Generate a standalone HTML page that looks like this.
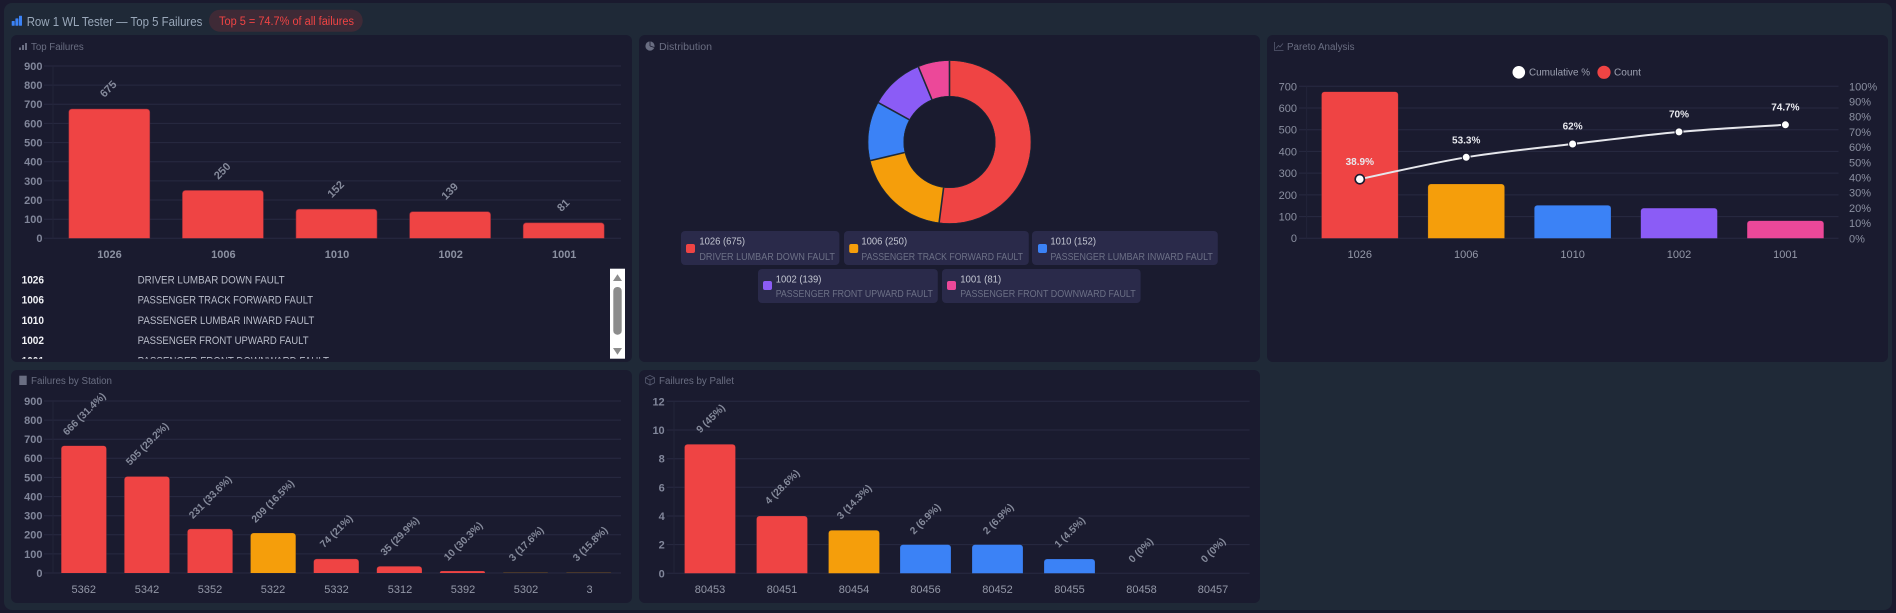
<!DOCTYPE html>
<html>
<head>
<meta charset="utf-8">
<title>Row 1 WL Tester</title>
<style>
html,body{margin:0;padding:0;background:#1a1a2e;width:1896px;height:613px;overflow:hidden}
svg{display:block;filter:blur(.35px)}
text{font-family:"Liberation Sans",sans-serif}
.tk{font-size:11px;fill:#8b90a1;text-anchor:end}
.tb{font-size:11px;fill:#81869a;text-anchor:end;font-weight:700}
.xb{font-size:11px;fill:#8b90a1;text-anchor:middle;font-weight:700}
.xn{font-size:11px;fill:#9498a8;text-anchor:middle}
.r{font-size:10.2px;font-weight:700;fill:#858a9b;text-anchor:middle}
.r1{font-size:11px;font-weight:700;fill:#858a9b;text-anchor:middle}
.pt{font-size:10px;fill:#6a6e82}
.c{font-size:11px;font-weight:700;fill:#f1f2f6}
.d{font-size:11px;fill:#b9bdca}
.l1{font-size:10.5px;fill:#c4c7d2}
.l2{font-size:10px;fill:#6c7086}
.p{font-size:10px;font-weight:700;fill:#e8e9ee;text-anchor:middle}
.g{stroke:#282a42;stroke-width:1;fill:none}
.v{stroke:#222439;stroke-width:1;fill:none}
</style>
</head>
<body>
<svg width="1896" height="613" viewBox="0 0 1896 613" xmlns="http://www.w3.org/2000/svg">
<defs>
<clipPath id="c1"><rect x="40" y="50" width="590" height="188.3"/></clipPath>
<clipPath id="c2"><rect x="40" y="380" width="590" height="193"/></clipPath>
<clipPath id="c3"><rect x="660" y="380" width="600" height="193.3"/></clipPath>
<clipPath id="c4"><rect x="1300" y="80" width="560" height="158.3"/></clipPath>
<clipPath id="lst"><rect x="11" y="268" width="598" height="90.7"/></clipPath>
</defs>

<rect x="4" y="3" width="1888" height="607" rx="8" fill="#1f2937"/>

<!-- header -->
<g fill="#3b82f6">
<rect x="11.7" y="21" width="3" height="4.7" rx=".6"/>
<rect x="15.4" y="18.4" width="3" height="7.3" rx=".6"/>
<rect x="19" y="15.7" width="3" height="10" rx=".6"/>
</g>
<text x="26.7" y="26" font-size="12.5" fill="#9aa8ba" textLength="175.6" lengthAdjust="spacingAndGlyphs">Row 1 WL Tester — Top 5 Failures</text>
<rect x="209" y="9.7" width="153.7" height="22" rx="11" fill="#3e2a36"/>
<text x="219" y="25" font-size="11.5" fill="#ef4444" textLength="135" lengthAdjust="spacingAndGlyphs">Top 5 = 74.7% of all failures</text>

<!-- panels -->
<g fill="#1a1b2f">
<rect x="11" y="35" width="621" height="327" rx="6"/>
<rect x="639" y="35" width="621" height="327" rx="6"/>
<rect x="1267" y="35" width="621" height="327" rx="6"/>
<rect x="11" y="370" width="621" height="233" rx="6"/>
<rect x="639" y="370" width="621" height="233" rx="6"/>
</g>

<!-- Panel 1 -->
<g fill="#6a6e82">
<rect x="19" y="47.5" width="2" height="2.5"/>
<rect x="22" y="45" width="2" height="5"/>
<rect x="25" y="43" width="2" height="7"/>
</g>
<text class="pt" x="31" y="50" textLength="52.7" lengthAdjust="spacingAndGlyphs">Top Failures</text>
<path class="g" d="M44 66H621M44 85.1H621M44 104.3H621M44 123.4H621M44 142.6H621M44 161.7H621M44 180.9H621M44 200H621M44 219.2H621M44 238.3H621"/>
<path class="v" d="M53 66V238.3"/>
<text class="tb" x="42.5" y="70">900</text>
<text class="tb" x="42.5" y="89">800</text>
<text class="tb" x="42.5" y="108">700</text>
<text class="tb" x="42.5" y="127.3">600</text>
<text class="tb" x="42.5" y="146.5">500</text>
<text class="tb" x="42.5" y="165.6">400</text>
<text class="tb" x="42.5" y="184.8">300</text>
<text class="tb" x="42.5" y="204">200</text>
<text class="tb" x="42.5" y="223.1">100</text>
<text class="tb" x="42.5" y="242.2">0</text>
<g clip-path="url(#c1)" fill="#ef4444" stroke="#8a2b3a" stroke-width=".6">
<rect x="68.8" y="109" width="81" height="140" rx="3"/>
<rect x="182.4" y="190.4" width="81" height="60" rx="3"/>
<rect x="296" y="209.2" width="81" height="40" rx="3"/>
<rect x="409.6" y="211.7" width="81" height="40" rx="3"/>
<rect x="523.2" y="222.8" width="81" height="30" rx="3"/>
</g>
<text class="r1" transform="rotate(-45 108 88.7)" x="108" y="92.7">675</text>
<text class="r1" transform="rotate(-45 222 170.7)" x="222" y="174.7">250</text>
<text class="r1" transform="rotate(-45 335.5 189)" x="335.5" y="193">152</text>
<text class="r1" transform="rotate(-45 449.5 191)" x="449.5" y="195">139</text>
<text class="r1" transform="rotate(-45 563 205)" x="563" y="209">81</text>
<text class="xb" x="109.5" y="258">1026</text>
<text class="xb" x="223.4" y="258">1006</text>
<text class="xb" x="337" y="258">1010</text>
<text class="xb" x="450.6" y="258">1002</text>
<text class="xb" x="564.2" y="258">1001</text>
<g clip-path="url(#lst)">
<text class="c" x="21.6" y="283.3" textLength="22.4" lengthAdjust="spacingAndGlyphs">1026</text>
<text class="d" x="137.6" y="283.3" textLength="147" lengthAdjust="spacingAndGlyphs">DRIVER LUMBAR DOWN FAULT</text>
<text class="c" x="21.6" y="303.5" textLength="22.4" lengthAdjust="spacingAndGlyphs">1006</text>
<text class="d" x="137.6" y="303.5" textLength="175.5" lengthAdjust="spacingAndGlyphs">PASSENGER TRACK FORWARD FAULT</text>
<text class="c" x="21.6" y="324" textLength="22.4" lengthAdjust="spacingAndGlyphs">1010</text>
<text class="d" x="137.6" y="324" textLength="176.7" lengthAdjust="spacingAndGlyphs">PASSENGER LUMBAR INWARD FAULT</text>
<text class="c" x="21.6" y="344" textLength="22.4" lengthAdjust="spacingAndGlyphs">1002</text>
<text class="d" x="137.6" y="344" textLength="171" lengthAdjust="spacingAndGlyphs">PASSENGER FRONT UPWARD FAULT</text>
<text class="c" x="21.6" y="364.5" textLength="22.4" lengthAdjust="spacingAndGlyphs">1001</text>
<text class="d" x="137.6" y="364.5" textLength="191.4" lengthAdjust="spacingAndGlyphs">PASSENGER FRONT DOWNWARD FAULT</text>
</g>
<rect x="610" y="268.7" width="15" height="90" fill="#fff"/>
<rect x="613.3" y="287" width="8.4" height="47.7" rx="4" fill="#8c8c8c"/>
<path d="M617.5 274.3L622 281H613Z" fill="#8c8c8c"/>
<path d="M613 348H622L617.5 354.7Z" fill="#8c8c8c"/>

<!-- Panel 2: Distribution -->
<circle cx="650" cy="46" r="4.6" fill="#6a6e82"/>
<path d="M650 46V41.4M650 46L654.4 47.5" stroke="#1a1b2f" stroke-width=".8" fill="none"/>
<text class="pt" x="659" y="50" textLength="53" lengthAdjust="spacingAndGlyphs">Distribution</text>
<g fill="none" stroke-width="35.3" transform="rotate(-90 949.5 142)">
<circle cx="949.5" cy="142" r="63.65" stroke="#ef4444" pathLength="1297" stroke-dasharray="675 622"/>
<circle cx="949.5" cy="142" r="63.65" stroke="#f59e0b" pathLength="1297" stroke-dasharray="250 1047" stroke-dashoffset="-675"/>
<circle cx="949.5" cy="142" r="63.65" stroke="#3b82f6" pathLength="1297" stroke-dasharray="152 1145" stroke-dashoffset="-925"/>
<circle cx="949.5" cy="142" r="63.65" stroke="#8b5cf6" pathLength="1297" stroke-dasharray="139 1158" stroke-dashoffset="-1077"/>
<circle cx="949.5" cy="142" r="63.65" stroke="#ec4899" pathLength="1297" stroke-dasharray="81 1216" stroke-dashoffset="-1216"/>
</g>
<path d="M939.1 222.6L943.6 187.6M870.4 160.6L904.7 152.5M878.4 102.7L909.2 119.7M918.4 66.9L931.9 99.5M949.5 60.7V96" stroke="#1f2937" stroke-width="1.6" fill="none"/>
<circle cx="949.5" cy="142" r="81.6" fill="none" stroke="#1f2937" stroke-width=".7"/>
<circle cx="949.5" cy="142" r="45.7" fill="none" stroke="#1f2937" stroke-width=".7"/>

<g fill="#2a2a4a">
<rect x="681" y="231" width="158.4" height="34" rx="4"/>
<rect x="844" y="231" width="184.8" height="34" rx="4"/>
<rect x="1032" y="231" width="185.8" height="34" rx="4"/>
<rect x="758" y="269" width="179.8" height="34" rx="4"/>
<rect x="942" y="269" width="198.6" height="34" rx="4"/>
</g>
<rect x="686" y="244" width="9" height="9" rx="2" fill="#ef4444"/>
<rect x="849.2" y="244" width="9" height="9" rx="2" fill="#f59e0b"/>
<rect x="1038" y="244" width="9" height="9" rx="2" fill="#3b82f6"/>
<rect x="763" y="281" width="9" height="9" rx="2" fill="#8b5cf6"/>
<rect x="947" y="281" width="9" height="9" rx="2" fill="#ec4899"/>
<text class="l1" x="699.4" y="244.5" textLength="45.7" lengthAdjust="spacingAndGlyphs">1026 (675)</text>
<text class="l2" x="699.4" y="260" textLength="135.5" lengthAdjust="spacingAndGlyphs">DRIVER LUMBAR DOWN FAULT</text>
<text class="l1" x="861.4" y="244.5" textLength="45.7" lengthAdjust="spacingAndGlyphs">1006 (250)</text>
<text class="l2" x="861.4" y="260" textLength="161.6" lengthAdjust="spacingAndGlyphs">PASSENGER TRACK FORWARD FAULT</text>
<text class="l1" x="1050.4" y="244.5" textLength="45.7" lengthAdjust="spacingAndGlyphs">1010 (152)</text>
<text class="l2" x="1050.4" y="260" textLength="162.5" lengthAdjust="spacingAndGlyphs">PASSENGER LUMBAR INWARD FAULT</text>
<text class="l1" x="775.7" y="282.5" textLength="45.7" lengthAdjust="spacingAndGlyphs">1002 (139)</text>
<text class="l2" x="775.7" y="297" textLength="157.2" lengthAdjust="spacingAndGlyphs">PASSENGER FRONT UPWARD FAULT</text>
<text class="l1" x="960.2" y="282.5" textLength="41" lengthAdjust="spacingAndGlyphs">1001 (81)</text>
<text class="l2" x="960.2" y="297" textLength="175.5" lengthAdjust="spacingAndGlyphs">PASSENGER FRONT DOWNWARD FAULT</text>

<!-- Panel 3: Pareto -->
<path d="M1274.5 42V50.5H1283.5M1276 48.5L1278.5 45.5L1280 47L1283 43.5" fill="none" stroke="#565a70" stroke-width=".8"/>
<text class="pt" x="1287" y="50" textLength="67.5" lengthAdjust="spacingAndGlyphs">Pareto Analysis</text>
<circle cx="1518.8" cy="72.3" r="6.3" fill="#fff"/>
<text x="1529" y="75.5" font-size="10.5" fill="#9ea2b2" textLength="61" lengthAdjust="spacingAndGlyphs">Cumulative %</text>
<circle cx="1604" cy="72.3" r="6.6" fill="#ef4444"/>
<text x="1614" y="75.5" font-size="10.5" fill="#9ea2b2" textLength="27" lengthAdjust="spacingAndGlyphs">Count</text>
<path class="g" d="M1299 86.3H1838.5M1299 108H1838.5M1299 129.7H1838.5M1299 151.4H1838.5M1299 173.1H1838.5M1299 194.9H1838.5M1299 216.6H1838.5M1299 238.3H1838.5"/>
<path class="v" d="M1306.6 86.3V238.3"/>
<text class="tk" x="1297" y="90.3">700</text>
<text class="tk" x="1297" y="112">600</text>
<text class="tk" x="1297" y="133.7">500</text>
<text class="tk" x="1297" y="155.4">400</text>
<text class="tk" x="1297" y="177.1">300</text>
<text class="tk" x="1297" y="198.9">200</text>
<text class="tk" x="1297" y="220.6">100</text>
<text class="tk" x="1297" y="242.2">0</text>
<g font-size="11" fill="#8b90a1">
<text x="1849" y="90.3">100%</text>
<text x="1849" y="105.5">90%</text>
<text x="1849" y="120.7">80%</text>
<text x="1849" y="135.9">70%</text>
<text x="1849" y="151.1">60%</text>
<text x="1849" y="166.3">50%</text>
<text x="1849" y="181.5">40%</text>
<text x="1849" y="196.7">30%</text>
<text x="1849" y="211.9">20%</text>
<text x="1849" y="227.1">10%</text>
<text x="1849" y="242.3">0%</text>
</g>
<g clip-path="url(#c4)" stroke="#1a1b2f" stroke-opacity=".35" stroke-width=".6">
<rect x="1321.5" y="91.7" width="76.7" height="160" rx="3" fill="#ef4444"/>
<rect x="1427.9" y="184" width="76.7" height="70" rx="3" fill="#f59e0b"/>
<rect x="1534.3" y="205.3" width="76.7" height="50" rx="3" fill="#3b82f6"/>
<rect x="1640.7" y="208.1" width="76.7" height="50" rx="3" fill="#8b5cf6"/>
<rect x="1747.1" y="220.7" width="76.7" height="30" rx="3" fill="#ec4899"/>
</g>
<path d="M1359.8 179.2C1359.8 179.2 1434.3 162.6 1466.2 157.3C1498.1 152 1540.7 147.8 1572.6 144C1604.5 140.2 1647.1 134.8 1679 131.9C1710.9 129 1785.4 124.8 1785.4 124.8" fill="none" stroke="#e6e7ec" stroke-width="2"/>
<circle cx="1359.8" cy="179.2" r="4.6" fill="#fff" stroke="#1a1b2f" stroke-width="1.6"/>
<circle cx="1466.2" cy="157.3" r="4" fill="#fff" stroke="#1a1b2f" stroke-width="1"/>
<circle cx="1572.6" cy="144" r="4" fill="#fff" stroke="#1a1b2f" stroke-width="1"/>
<circle cx="1679" cy="131.9" r="4" fill="#fff" stroke="#1a1b2f" stroke-width="1"/>
<circle cx="1785.4" cy="124.8" r="4" fill="#fff" stroke="#1a1b2f" stroke-width="1"/>
<text class="p" x="1359.8" y="165">38.9%</text>
<text class="p" x="1466.2" y="143.7">53.3%</text>
<text class="p" x="1572.6" y="129.7">62%</text>
<text class="p" x="1679" y="117.7">70%</text>
<text class="p" x="1785.4" y="110.7">74.7%</text>
<text class="xn" x="1359.8" y="258">1026</text>
<text class="xn" x="1466.2" y="258">1006</text>
<text class="xn" x="1572.6" y="258">1010</text>
<text class="xn" x="1679" y="258">1002</text>
<text class="xn" x="1785.4" y="258">1001</text>

<!-- Panel 4: Station -->
<rect x="19.3" y="375.7" width="7.4" height="9.3" fill="#6a6e82"/>
<text class="pt" x="31" y="384" textLength="81" lengthAdjust="spacingAndGlyphs">Failures by Station</text>
<path class="g" d="M44 401H621M44 420.1H621M44 439.2H621M44 458.3H621M44 477.4H621M44 496.6H621M44 515.7H621M44 534.8H621M44 553.9H621M44 573H621"/>
<path class="v" d="M53 401V573"/>
<text class="tb" x="42.5" y="405">900</text>
<text class="tb" x="42.5" y="424">800</text>
<text class="tb" x="42.5" y="443">700</text>
<text class="tb" x="42.5" y="462.2">600</text>
<text class="tb" x="42.5" y="481.3">500</text>
<text class="tb" x="42.5" y="500.5">400</text>
<text class="tb" x="42.5" y="519.6">300</text>
<text class="tb" x="42.5" y="538.7">200</text>
<text class="tb" x="42.5" y="557.8">100</text>
<text class="tb" x="42.5" y="577">0</text>
<g clip-path="url(#c2)" stroke="#1a1b2f" stroke-opacity=".35" stroke-width=".6">
<rect x="61.2" y="445.7" width="45.3" height="140" rx="3" fill="#ef4444"/>
<rect x="124.3" y="476.5" width="45.3" height="110" rx="3" fill="#ef4444"/>
<rect x="187.4" y="528.9" width="45.3" height="60" rx="3" fill="#ef4444"/>
<rect x="250.5" y="533" width="45.3" height="60" rx="3" fill="#f59e0b"/>
<rect x="313.6" y="558.9" width="45.3" height="30" rx="3" fill="#ef4444"/>
<rect x="376.7" y="566.3" width="45.3" height="20" rx="3" fill="#ef4444"/>
<rect x="439.8" y="571" width="45.3" height="12" rx="2" fill="#ef4444"/>
<rect x="502.9" y="572.4" width="45.3" height="10" rx="1" fill="#f59e0b" fill-opacity=".4"/>
<rect x="566" y="572.4" width="45.3" height="10" rx="1" fill="#f59e0b" fill-opacity=".4"/>
</g>
<text class="r" transform="rotate(-45 84 413.7)" x="84" y="417.4">666 (31.4%)</text>
<text class="r" transform="rotate(-45 147 443.7)" x="147" y="447.4">505 (29.2%)</text>
<text class="r" transform="rotate(-45 210 497)" x="210" y="500.7">231 (33.6%)</text>
<text class="r" transform="rotate(-45 272.6 501)" x="272.6" y="504.7">209 (16.5%)</text>
<text class="r" transform="rotate(-45 336 531)" x="336" y="534.7">74 (21%)</text>
<text class="r" transform="rotate(-45 399.6 536)" x="399.6" y="539.7">35 (29.9%)</text>
<text class="r" transform="rotate(-45 463 541)" x="463" y="544.7">10 (30.3%)</text>
<text class="r" transform="rotate(-45 526 543.7)" x="526" y="547.4">3 (17.6%)</text>
<text class="r" transform="rotate(-45 590 543.7)" x="590" y="547.4">3 (15.8%)</text>
<text class="xn" x="83.8" y="593">5362</text>
<text class="xn" x="147" y="593">5342</text>
<text class="xn" x="210" y="593">5352</text>
<text class="xn" x="273" y="593">5322</text>
<text class="xn" x="336.5" y="593">5332</text>
<text class="xn" x="400" y="593">5312</text>
<text class="xn" x="463" y="593">5392</text>
<text class="xn" x="526" y="593">5302</text>
<text class="xn" x="589.5" y="593">3</text>

<!-- Panel 5: Pallet -->
<path d="M650 375.5L654.5 377.7V382.7L650 385L645.5 382.7V377.7ZM645.5 377.7L650 380L654.5 377.7M650 380V385" fill="none" stroke="#565a70" stroke-width=".8"/>
<text class="pt" x="659" y="384" textLength="75" lengthAdjust="spacingAndGlyphs">Failures by Pallet</text>
<path class="g" d="M666.7 401.3H1249.6M666.7 430H1249.6M666.7 458.7H1249.6M666.7 487.3H1249.6M666.7 516H1249.6M666.7 544.6H1249.6M666.7 573.3H1249.6"/>
<path class="v" d="M674 401.3V573.3"/>
<text class="tb" x="664.7" y="405.3">12</text>
<text class="tb" x="664.7" y="434">10</text>
<text class="tb" x="664.7" y="462.7">8</text>
<text class="tb" x="664.7" y="491.3">6</text>
<text class="tb" x="664.7" y="520">4</text>
<text class="tb" x="664.7" y="548.6">2</text>
<text class="tb" x="664.7" y="577.3">0</text>
<g clip-path="url(#c3)" stroke="#1a1b2f" stroke-opacity=".35" stroke-width=".6">
<rect x="684.5" y="444.3" width="51" height="140" rx="3" fill="#ef4444"/>
<rect x="756.5" y="516" width="51" height="70" rx="3" fill="#ef4444"/>
<rect x="828.5" y="530.3" width="51" height="60" rx="3" fill="#f59e0b"/>
<rect x="900" y="544.6" width="51" height="40" rx="3" fill="#3b82f6"/>
<rect x="972" y="544.6" width="51" height="40" rx="3" fill="#3b82f6"/>
<rect x="1044" y="559" width="51" height="30" rx="3" fill="#3b82f6"/>
</g>
<text class="r" transform="rotate(-45 710.4 418.3)" x="710.4" y="422">9 (45%)</text>
<text class="r" transform="rotate(-45 782 486.7)" x="782" y="490.4">4 (28.6%)</text>
<text class="r" transform="rotate(-45 854 501.7)" x="854" y="505.4">3 (14.3%)</text>
<text class="r" transform="rotate(-45 925 518.7)" x="925" y="522.4">2 (6.9%)</text>
<text class="r" transform="rotate(-45 998 518.7)" x="998" y="522.4">2 (6.9%)</text>
<text class="r" transform="rotate(-45 1069.6 532)" x="1069.6" y="535.7">1 (4.5%)</text>
<text class="r" transform="rotate(-45 1140.6 550)" x="1140.6" y="553.7">0 (0%)</text>
<text class="r" transform="rotate(-45 1213 550)" x="1213" y="553.7">0 (0%)</text>
<text class="xn" x="710" y="593">80453</text>
<text class="xn" x="782" y="593">80451</text>
<text class="xn" x="854" y="593">80454</text>
<text class="xn" x="925.5" y="593">80456</text>
<text class="xn" x="997.5" y="593">80452</text>
<text class="xn" x="1069.5" y="593">80455</text>
<text class="xn" x="1141.5" y="593">80458</text>
<text class="xn" x="1213" y="593">80457</text>
</svg>
</body>
</html>
